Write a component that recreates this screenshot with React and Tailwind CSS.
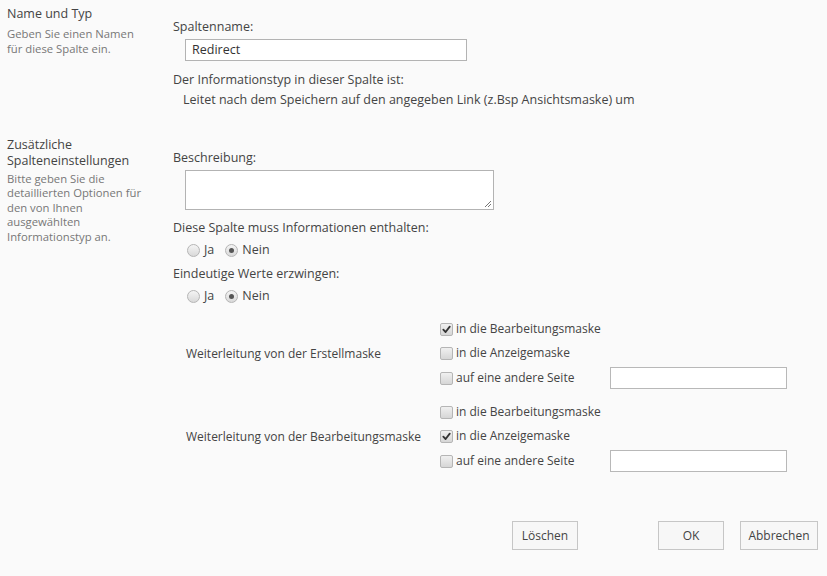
import React from 'react';

const FONT = { fontFamily: '"Open Sans", "Noto Sans", Arial, sans-serif' };

function Radio({ checked, label }) {
  return (
    <span className="flex items-center">
      <span className="flex h-[13px] w-[13px] items-center justify-center rounded-full border border-[#b5b5b5] bg-gradient-to-b from-[#f4f4f4] to-[#d9d9d9]">
        {checked && <span className="h-[5px] w-[5px] rounded-full bg-[#555]" />}
      </span>
      <span className="ml-[4px]">{label}</span>
    </span>
  );
}

function Check({ checked, label }) {
  return (
    <div className="flex h-[24px] items-center">
      <span className="flex h-[13px] w-[13px] items-center justify-center rounded-[2px] border border-[#b5b5b5] bg-gradient-to-b from-[#f0f0f0] to-[#d6d6d6]">
        {checked && (
          <svg width="9" height="9" viewBox="0 0 10 10">
            <path d="M1.5 5.2 L4 7.8 L8.6 1.8" fill="none" stroke="#333" strokeWidth="2" strokeLinecap="round" strokeLinejoin="round" />
          </svg>
        )}
      </span>
      <span className="ml-[3px] w-[154px]">{label}</span>
    </div>
  );
}

function RedirectBlock({ title, checks }) {
  return (
    <div className="flex items-center">
      <div className="w-[267px] pl-[13px] text-[12px]">{title}</div>
      <div className="flex flex-col text-[12px]">
        <Check checked={checks[0]} label="in die Bearbeitungsmaske" />
        <Check checked={checks[1]} label="in die Anzeigemaske" />
        <div className="flex items-center">
          <div className="flex h-[26px] items-center">
            <Check checked={checks[2]} label="auf eine andere Seite" />
          </div>
          <div className="h-[22px] w-[177px] border border-[#b8b8b8] bg-white" />
        </div>
      </div>
    </div>
  );
}

function Btn({ children, w }) {
  return (
    <button className={`h-[29px] ${w} border border-[#c6c6c6] bg-[#f7f7f7] text-[12px] text-[#444]`}>
      {children}
    </button>
  );
}

export default function App() {
  return (
    <div className="h-[576px] w-[827px] overflow-hidden bg-[#fafafa] text-[#444]" style={FONT}>
      {/* Name und Typ */}
      <div className="flex pt-[5px]">
        <div className="w-[173px] pl-[7px]">
          <div className="text-[12.5px] leading-[17px]">Name und Typ</div>
          <div className="mt-[5px] text-[11.3px] leading-[14.5px] text-[#777]">
            Geben Sie einen Namen
            <br />
            für diese Spalte ein.
          </div>
        </div>
        <div className="pt-[13px] text-[12.5px]">
          <div className="leading-[17px]">Spaltenname:</div>
          <div className="ml-[12px] mt-[4px] flex h-[22px] w-[282px] items-center border border-[#b3b3b3] bg-white pl-[6px] text-[#333]">
            Redirect
          </div>
          <div className="mt-[10px] leading-[17px]">Der Informationstyp in dieser Spalte ist:</div>
          <div className="ml-[10px] mt-[3px] leading-[17px]">
            Leitet nach dem Speichern auf den angegeben Link (z.Bsp Ansichtsmaske) um
          </div>
        </div>
      </div>

      {/* Zusätzliche Spalteneinstellungen */}
      <div className="mt-[28px] flex">
        <div className="w-[173px] pl-[7px] pt-[1px]">
          <div className="text-[12.5px] leading-[16px]">
            Zusätzliche
            <br />
            Spalteneinstellungen
          </div>
          <div className="mt-[3px] text-[11.3px] leading-[14.4px] text-[#777]">
            Bitte geben Sie die
            <br />
            detaillierten Optionen für
            <br />
            den von Ihnen
            <br />
            ausgewählten
            <br />
            Informationstyp an.
          </div>
        </div>
        <div className="pt-[13px] text-[12.5px]">
          <div className="leading-[17px]">Beschreibung:</div>
          <div className="relative ml-[12px] mt-[4px] h-[40px] w-[309px] border border-[#b3b3b3] bg-white">
            <svg className="absolute bottom-[1px] right-[1px]" width="8" height="8" viewBox="0 0 8 8">
              <path d="M7 1 L1 7 M7 4 L4 7" stroke="#777" strokeWidth="1" />
            </svg>
          </div>
          <div className="mt-[9px] leading-[17px]">Diese Spalte muss Informationen enthalten:</div>
          <div className="ml-[14px] mt-[6px] flex h-[17px] gap-[11px]">
            <Radio label="Ja" />
            <Radio checked label="Nein" />
          </div>
          <div className="mt-[6px] leading-[17px]">Eindeutige Werte erzwingen:</div>
          <div className="ml-[14px] mt-[6px] flex h-[17px] gap-[11px]">
            <Radio label="Ja" />
            <Radio checked label="Nein" />
          </div>
        </div>
      </div>

      {/* Weiterleitung */}
      <div className="mt-[12px] pl-[173px]">
        <RedirectBlock title="Weiterleitung von der Erstellmaske" checks={[true, false, false]} />
        <div className="mt-[9px]">
          <RedirectBlock title="Weiterleitung von der Bearbeitungsmaske" checks={[false, true, false]} />
        </div>
      </div>

      {/* Buttons */}
      <div className="mt-[47px] flex pl-[512px]">
        <Btn w="w-[66px]">Löschen</Btn>
        <div className="ml-[80px] flex gap-[16px]">
          <Btn w="w-[66px]">OK</Btn>
          <Btn w="w-[78px]">Abbrechen</Btn>
        </div>
      </div>
    </div>
  );
}
